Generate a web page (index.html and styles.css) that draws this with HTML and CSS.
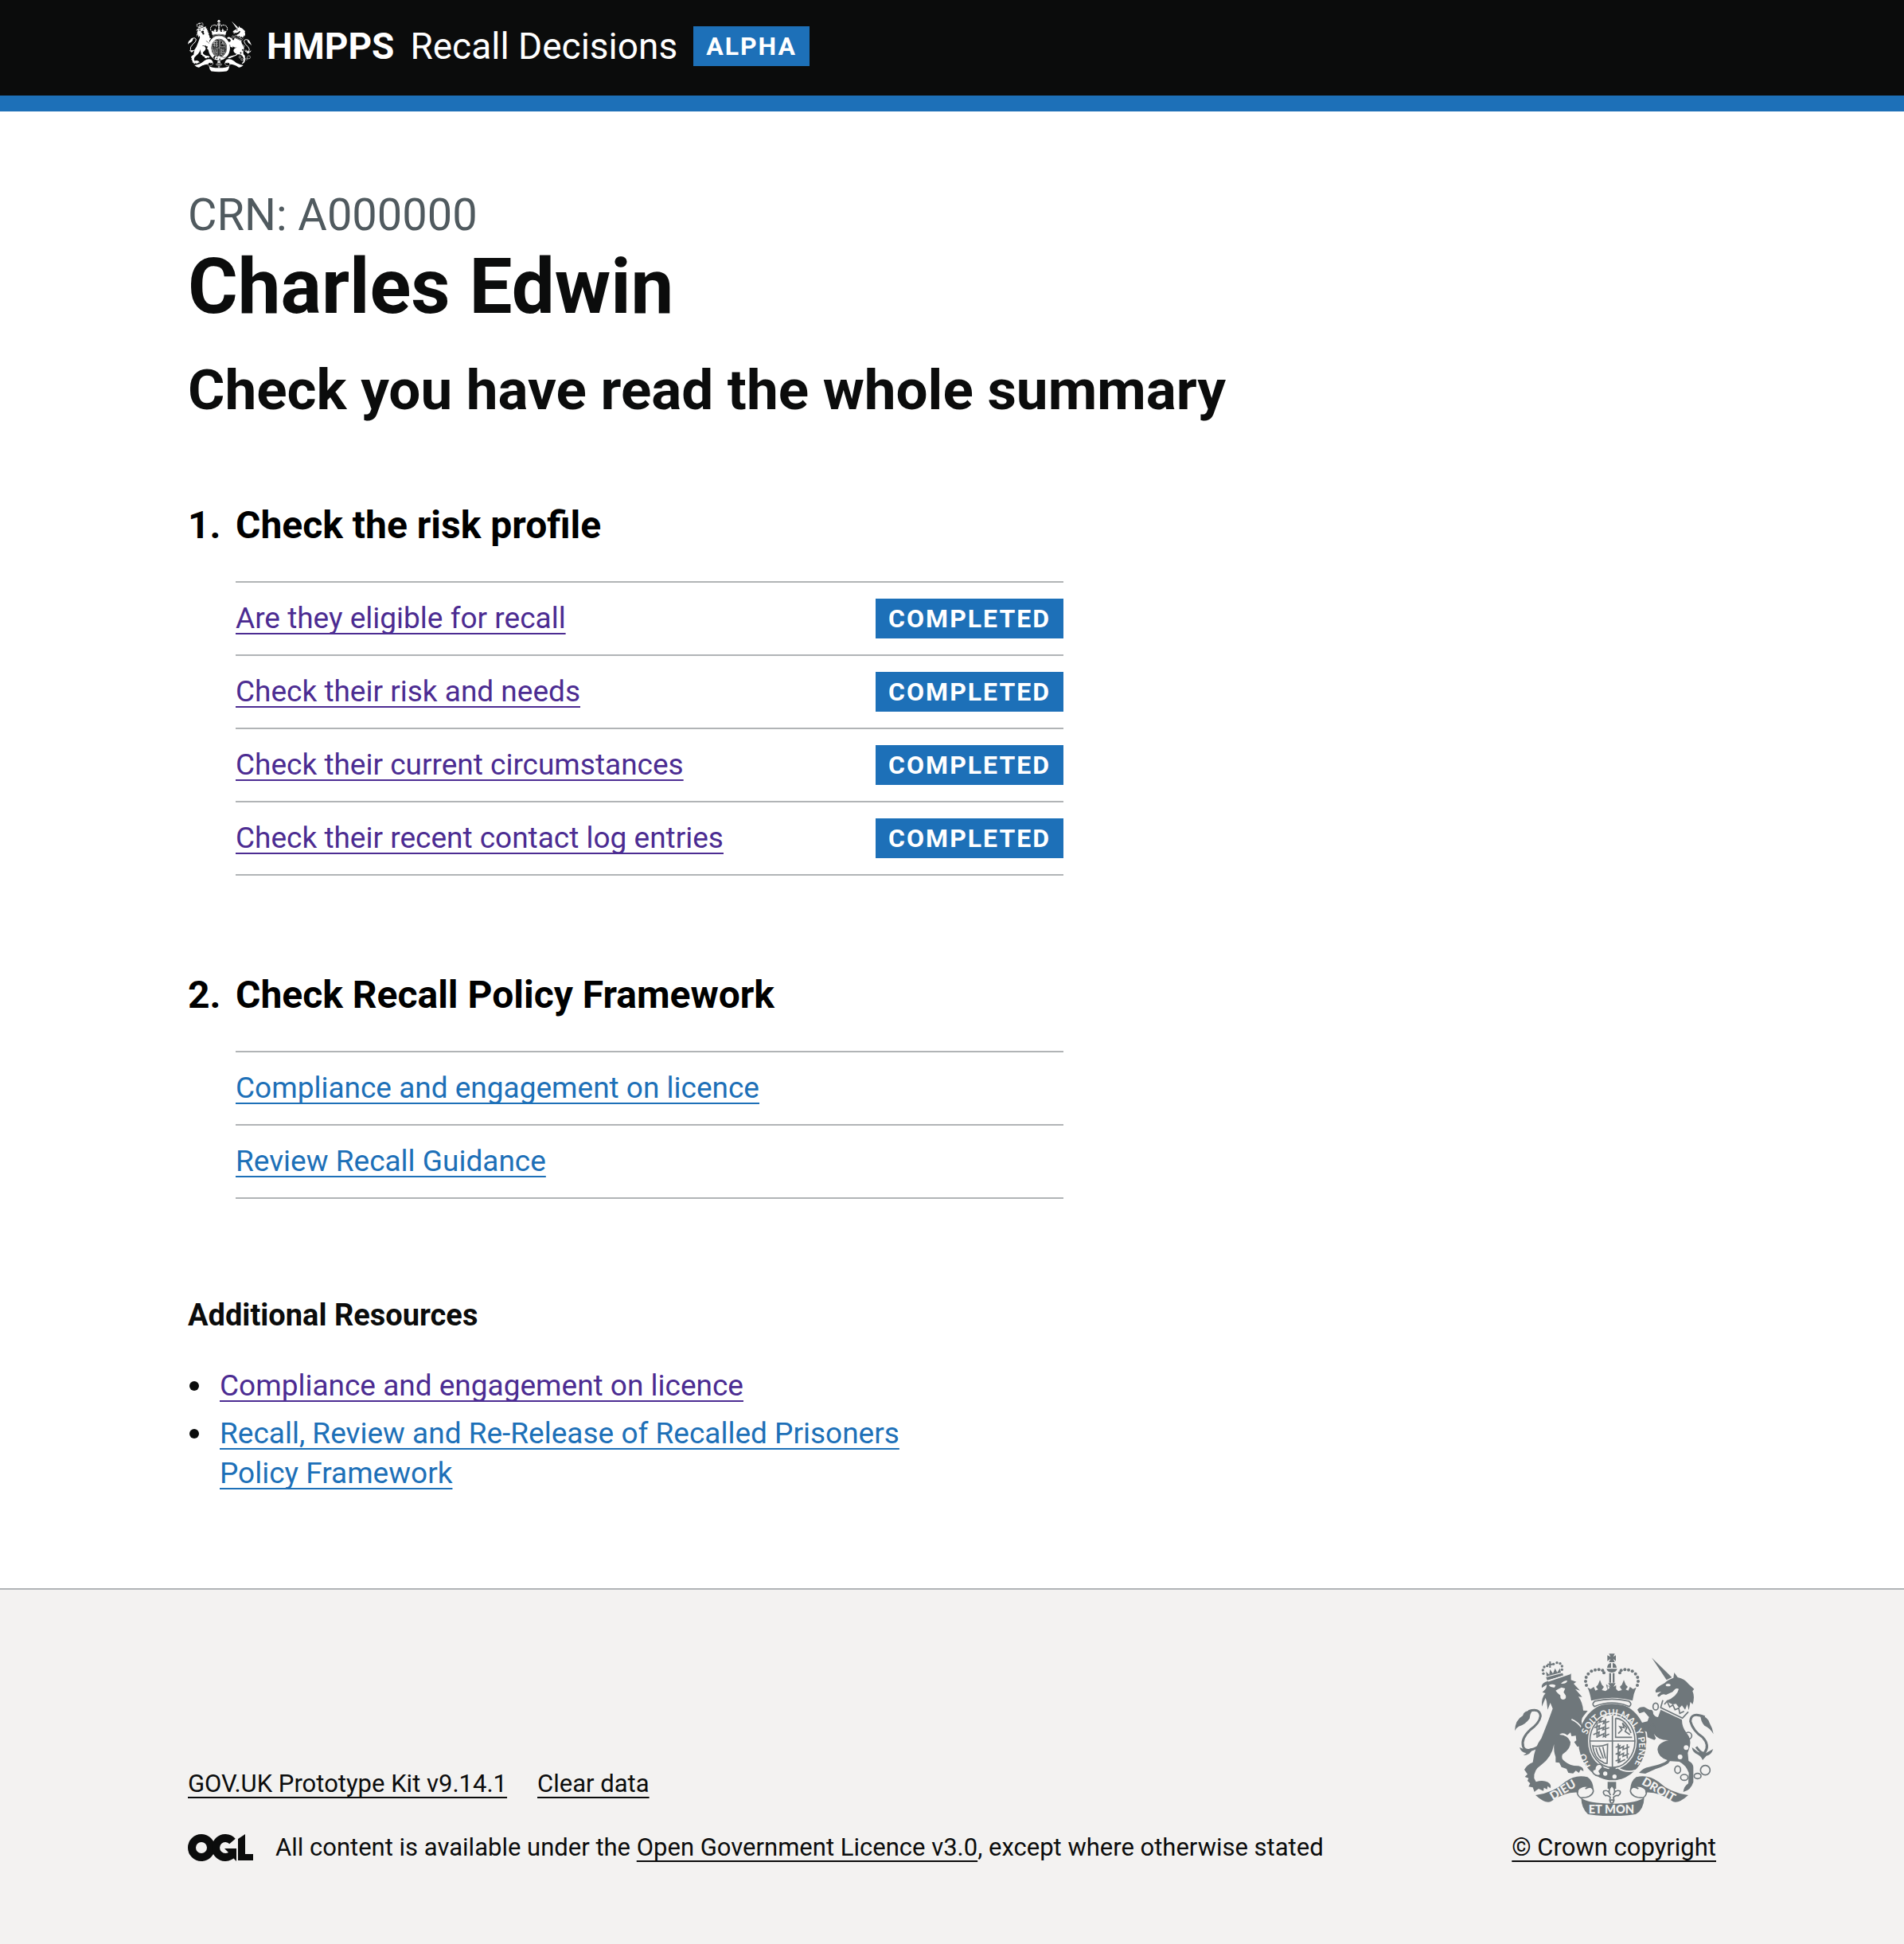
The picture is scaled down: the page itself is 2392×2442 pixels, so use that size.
FILE: index.html
```html
<!DOCTYPE html>
<html lang="en">
<head>
<meta charset="utf-8">
<meta name="viewport" content="width=device-width, initial-scale=1">
<title>Charles Edwin - Recall Decisions</title>
<link rel="stylesheet" href="styles.css">
</head>
<body>

<svg class="sprite" aria-hidden="true">
  <defs>
    <g id="arms">
      <!-- lion -->
      <path d="M176 157L272 126V150L292 157L282 164L306 190L288 184L314 214L300 213Q316 235 318 265L335 266L320 285Q305 300 318 330L325 345Q330 370 338 408L324 398L318 408L308 398L296 402L284 384L292 378L290 360L274 362L270 348L258 358Q240 345 228 356Q262 358 270 384Q272 410 240 430Q232 445 250 458Q270 475 300 474Q320 478 319 494L308 488L302 500L290 492L280 502L262 500L255 485L236 478L228 462L214 460V440Q206 420 208 392Q200 440 160 470Q130 490 133 520L140 534Q165 525 185 535Q200 545 194 558L184 550L182 562L170 556L168 568L150 560Q140 566 134 572L128 555L112 552L118 540L108 530L112 520L98 515L108 505L96 488Q105 470 128 460Q135 400 160 370Q185 310 203 258L194 236L184 262L180 230L176 218L162 250Q160 215 176 200L164 196Q184 180 180 168L162 180Q158 165 176 157Z"/>
      <path d="M178 140L240 124L244 134L182 151Z"/>
      <path d="M180 136L178 118L190 130L193 110L204 126L212 106L220 122L230 106L234 122Z"/>
      <path d="M190 80H196V88H203V94H196V104H190V94H183V88H190Z"/>
      <g>
        <circle cx="168" cy="126" r="5"/><circle cx="166" cy="113" r="5"/><circle cx="171" cy="101" r="5"/><circle cx="182" cy="97" r="5"/>
        <circle cx="206" cy="90" r="5"/><circle cx="219" cy="85" r="5"/><circle cx="231" cy="88" r="5"/><circle cx="238" cy="98" r="5"/><circle cx="238" cy="111" r="5"/>
      </g>
      <g class="cut">
        <path d="M188 170Q200 162 214 170L210 178Q196 180 188 170Z"/>
        <path d="M234 164Q244 152 258 152Q256 166 234 164Z"/>
        <path d="M214 190L224 184L236 178L250 182L244 196L252 208Q256 222 242 224Q230 222 232 208L222 200Z"/>
      </g>
      <path class="cutline" d="M274 298Q322 318 340 398M186 154L270 126"/>
      <path d="M60 342Q62 300 90 285Q92 265 128 264Q118 275 116 295Q100 318 75 325Q65 330 60 342Z"/>
      <path class="tail" d="M112 268Q154 254 157 286Q154 312 118 338Q82 372 92 402Q102 428 152 400"/>
      <path d="M78 404L102 414L128 406Q120 434 92 434L104 426Q84 424 78 404Z"/>

      <!-- unicorn -->
      <path d="M576 66L652 140L632 150Z"/>
      <path d="M590 190Q592 178 625 162Q634 150 658 142L661 122L674 140Q700 145 716 166L736 184L730 192Q740 215 730 242L722 232L716 264L710 242L702 262L690 246L680 256L668 240L655 242Q640 238 632 228Q672 212 678 184Q668 176 655 195L630 206Q615 200 606 212Q598 216 598 206L612 194L592 198Z"/>
      <path d="M610 262L690 300Q690 330 708 350Q726 372 720 400L712 425L715 455Q732 462 733 480V535Q724 565 695 572Q698 550 714 540L716 500Q705 470 680 458L645 456Q640 470 590 486L552 503L528 500Q545 480 565 478Q625 465 635 452Q600 440 598 412Q600 385 640 377Q600 378 584 352L592 370L586 376L560 366L558 346L538 336L536 312L560 306L566 290L548 270L530 276L522 262Q530 250 548 252L578 268Q584 288 600 290Z"/>
      <path class="line" d="M618 226L610 254L692 294L714 270M624 242L634 230L644 252L656 244L664 262L678 256L682 276L698 268"/>
      <path d="M760 283Q790 290 794 312Q805 330 809 354Q795 330 775 322Q760 305 760 283Z"/>
      <path class="tail" d="M776 290Q724 268 722 306Q732 342 768 366Q796 396 776 424Q764 430 744 402"/>
      <path d="M728 404L752 422L780 426L808 410Q800 434 782 436L768 452Q764 438 748 430Q730 424 728 404Z"/>
      <g class="cut">
        <circle cx="706" cy="405" r="9"/><circle cx="683" cy="440" r="9"/><ellipse cx="638" cy="169" rx="9" ry="5"/>
      </g>
      <g class="ring">
        <ellipse cx="591" cy="250" rx="10" ry="13"/><ellipse cx="580" cy="334" rx="11" ry="15"/><circle cx="714" cy="360" r="13"/>
        <ellipse cx="674" cy="488" rx="11" ry="14"/><ellipse cx="699" cy="517" rx="14" ry="11"/><ellipse cx="749" cy="512" rx="13" ry="10"/><circle cx="778" cy="490" r="18"/><ellipse cx="571" cy="275" rx="8" ry="10"/>
      </g>

      <!-- crown -->
      <path d="M415 51H437L431 63L441 57V79L431 70L437 83H415L421 70L409 79V57L421 63Z"/>
      <path d="M408 104Q410 88 423 86V104ZM429 104V86Q442 88 444 104ZM406 108H446Q444 120 426 122Q408 120 406 108ZM416 124H423V160H416ZM429 124H436V160H429Z"/>
      <g>
        <circle cx="396" cy="123" r="6"/><circle cx="391" cy="114" r="6"/><circle cx="377" cy="111" r="6"/><circle cx="363" cy="112" r="6"/><circle cx="349" cy="117" r="6"/><circle cx="337" cy="127" r="6"/><circle cx="329" cy="140" r="6"/><circle cx="327" cy="155" r="6"/><circle cx="330" cy="170" r="6"/>
        <circle cx="456" cy="123" r="6"/><circle cx="461" cy="114" r="6"/><circle cx="475" cy="111" r="6"/><circle cx="489" cy="112" r="6"/><circle cx="503" cy="117" r="6"/><circle cx="515" cy="127" r="6"/><circle cx="523" cy="140" r="6"/><circle cx="525" cy="155" r="6"/><circle cx="522" cy="170" r="6"/>
      </g>
      <path d="M334 178L346 184L358 176L364 190L374 186L366 176L374 168L381 150L388 168L396 176L388 188L402 192L418 180L410 170V192L404 166L420 176L412 162H440L432 176L448 166L442 170V184L450 192L464 188L456 176L464 168L471 150L478 168L486 176L478 186L488 190L494 176L506 184L518 178Q508 200 504 228Q426 206 348 228Q344 198 334 178Z"/>

      <!-- garter and shield -->
      <ellipse cx="428" cy="382" rx="128" ry="146"/>
      <path class="cut" d="M360 254Q426 226 494 254L498 232H354Z"/>
      <path class="roll" d="M362 230Q426 214 490 230Q504 240 492 250Q426 222 360 250Q348 240 362 230Z"/>
      <ellipse class="cut" cx="428" cy="380" rx="92" ry="107"/>
      <ellipse class="line" cx="428" cy="380" rx="85" ry="100"/>
      <path class="line" d="M428 280V480M343 380H513"/>
      <path class="charge" d="M364 306L384 300L378 310L398 304L394 314L416 306M360 330L380 322L376 336L396 328L392 338L416 330M356 356L378 346L376 362L396 352L394 364L416 354M370 300V368M402 296V368"/>
      <path class="charge" d="M440 404L456 398L452 410L470 400L468 412L492 402M440 430L456 422L452 436L470 426L468 438L490 428M440 456L456 448L454 460L476 450M450 390V464M484 392V446"/>
      <path class="charge" d="M440 294V366H502M440 294Q478 298 498 350M450 352L464 338L456 326L472 330L466 312L482 330L476 344L494 356"/>
      <path class="charge" d="M354 398Q380 404 410 392L408 464Q396 466 390 458Q360 446 354 398ZM366 406Q372 436 386 446M378 404L394 446M392 402L402 446"/>
      <path d="M416 478H440V490H416Z"/>
      <!-- buckle -->
      <path class="roll" d="M384 468Q362 466 362 486Q348 488 356 502Q372 518 384 506L378 494L392 478Z"/>
      <g class="cut"><circle cx="401" cy="503" r="8"/><circle cx="436" cy="514" r="8"/></g>
      <path class="cutline" d="M450 482Q490 508 540 480"/>

      <!-- ribbon -->
      <path class="roll" d="M326 560Q356 544 356 570Q350 594 308 594Q288 580 300 560Q312 546 340 552Z"/>
      <path class="roll" d="M526 560Q496 544 496 570Q502 594 544 594Q564 580 552 560Q540 546 512 552Z"/>
      <path d="M138 584Q206 576 250 534Q290 504 334 516Q356 530 357 566Q338 544 312 556Q296 562 300 574Q250 570 196 608Q176 618 138 584Z"/>
      <path d="M714 584Q646 576 602 534Q562 504 518 516Q496 530 495 566Q514 544 540 556Q556 562 552 574Q602 570 656 608Q676 618 714 584Z"/>
      <path d="M310 594Q336 616 426 616Q516 616 548 594Q546 640 516 656Q426 670 336 656Q312 636 310 594Z"/>
      <path d="M410 534H442V560H410Z"/>
      <path class="fleur" d="M426 548Q408 566 421 584Q412 562 396 568Q390 578 402 586Q410 582 420 592L418 604H434L432 592Q442 582 450 586Q462 578 456 568Q440 562 431 584Q444 566 426 548Z"/>
      <circle class="fleur" cx="426" cy="608" r="6"/>
    </g>
    <path id="garter-line" d="M350 480A102 118 0 1 1 500 484"/>
  </defs>
</svg>

<header class="header">
  <div class="container header-row">
    <a class="brand" href="#">
      <svg class="header-crest" viewBox="60 50 750 620" aria-hidden="true"><use href="#arms"/></svg>
      <strong>HMPPS</strong>
    </a>
    <a class="service" href="#">Recall Decisions</a>
    <strong class="tag">ALPHA</strong>
  </div>
</header>

<main class="container main">
  <h1 class="title"><span class="caption">CRN: A000000</span>Charles Edwin</h1>
  <h2 class="subtitle">Check you have read the whole summary</h2>

  <ol class="tasks">
    <li class="section">
      <h2 class="section-title"><span class="number">1.</span>Check the risk profile</h2>
      <ul class="items">
        <li class="item"><a class="visited" href="#">Are they eligible for recall</a><strong class="tag">COMPLETED</strong></li>
        <li class="item"><a class="visited" href="#">Check their risk and needs</a><strong class="tag">COMPLETED</strong></li>
        <li class="item"><a class="visited" href="#">Check their current circumstances</a><strong class="tag">COMPLETED</strong></li>
        <li class="item"><a class="visited" href="#">Check their recent contact log entries</a><strong class="tag">COMPLETED</strong></li>
      </ul>
    </li>
    <li class="section">
      <h2 class="section-title"><span class="number">2.</span>Check Recall Policy Framework</h2>
      <ul class="items">
        <li class="item"><a href="#">Compliance and engagement on licence</a></li>
        <li class="item"><a href="#">Review Recall Guidance</a></li>
      </ul>
    </li>
  </ol>

  <h3 class="resources-title">Additional Resources</h3>
  <ul class="resources">
    <li><a class="visited" href="#">Compliance and engagement on licence</a></li>
    <li><a href="#">Recall, Review and Re-Release of Recalled Prisoners Policy Framework</a></li>
  </ul>
</main>

<footer class="footer">
  <div class="container footer-row">
    <div class="meta">
      <div class="footer-links"><a href="#">GOV.UK Prototype Kit v9.14.1</a><a href="#">Clear data</a></div>
      <div class="licence">
        <svg class="ogl" viewBox="0 0 82 34" role="img" aria-label="Open Government Licence">
          <circle cx="17" cy="17" r="12"/>
          <path d="M56 9A12 12 0 1 0 56 25"/>
          <path class="solid" d="M46 18H61V34L56 29L50 27L52 24Z"/>
          <path class="solid" d="M63 6L72 0V25H82V33H63Z"/>
        </svg>
        <span>All content is available under the <a href="#">Open Government Licence v3.0</a>, except where otherwise stated</span>
      </div>
    </div>
    <a class="copyright" href="#">
      <svg class="footer-crest" viewBox="60 50 750 612" aria-hidden="true">
        <use href="#arms"/>
        <g class="motto">
          <text><textPath href="#garter-line" startOffset="6">HO<tspan dx="70">SOIT QUI MAL Y PENSE</tspan></textPath></text>
          <text class="ribbon" transform="translate(204 604) rotate(-31)">DIEU</text>
          <text class="ribbon" transform="translate(536 542) rotate(30)">DROIT</text>
          <text class="ribbon" x="338" y="654">ET MON</text>
        </g>
      </svg>
      <span>© Crown copyright</span>
    </a>
  </div>
</footer>

</body>
</html>
```
FILE: styles.css
```css
* {
  box-sizing: border-box;
}

body {
  margin: 0;
  background: #f3f2f1;
  color: #0b0c0c;
  font-family: Roboto, "Liberation Sans", sans-serif;
  font-size: 37px;
  line-height: 50px;
}

h1, h2, h3, ol, ul {
  margin: 0;
  padding: 0;
}

a {
  color: #1d70b8;
  text-decoration-line: underline;
  text-decoration-thickness: 2px;
  text-underline-offset: 6px;
  text-decoration-skip-ink: none;
}

.visited {
  color: #4c2c92;
}

.sprite {
  position: absolute;
  width: 0;
  height: 0;
}

.container {
  max-width: 1920px;
  margin: 0 auto;
}

/* Header */

.header {
  background: #0b0c0c;
  border-bottom: 20px solid #1d70b8;
  color: #ffffff;
}

.header-row {
  display: flex;
  align-items: center;
  gap: 20px;
  padding-top: 24px;
  padding-bottom: 28px;
  font-size: 46px;
}

.header-row a {
  color: #ffffff;
  text-decoration: none;
}

.brand {
  display: flex;
  align-items: center;
  gap: 19px;
}

.header-crest {
  --cut: #0b0c0c;
  display: block;
  width: 80px;
  height: 68px;
  fill: currentColor;
}

.tag {
  flex: none;
  padding: 0 16px;
  background: #1d70b8;
  color: #ffffff;
  font-size: 32px;
  line-height: 50px;
  letter-spacing: 2px;
}

/* Main content */

.main {
  max-width: none;
  padding: 100px max(30px, calc(50% - 960px)) 109px;
  background: #ffffff;
}

.title {
  font-size: 96px;
  line-height: 100px;
}

.caption {
  display: block;
  margin-bottom: 10px;
  color: #505a5f;
  font-size: 56px;
  font-weight: 400;
  line-height: 60px;
}

.subtitle {
  margin: 40px 0 104px;
  font-size: 71px;
  line-height: 80px;
}

.tasks,
.items {
  list-style: none;
}

.section {
  max-width: 1100px;
  margin-bottom: 124px;
}

.section-title {
  display: flex;
  margin-bottom: 44px;
  color: #000000;
  font-size: 48px;
  line-height: 52px;
}

.number {
  width: 60px;
}

.items {
  margin-left: 60px;
  border-top: 2px solid #b1b4b6;
}

.item {
  display: flex;
  align-items: center;
  justify-content: space-between;
  padding: 20px 0;
  border-bottom: 2px solid #b1b4b6;
}

.resources-title {
  margin-bottom: 42px;
  font-size: 38px;
  line-height: 44px;
}

.resources {
  max-width: 940px;
  list-style: none;
}

.resources li {
  display: grid;
  grid-template-columns: 12px 1fr;
  gap: 26px;
  margin-bottom: 10px;
  padding-left: 2px;
}

.resources li::before {
  content: "";
  height: 12px;
  margin-top: 19px;
  border-radius: 50%;
  background: #0b0c0c;
}

/* Footer */

.footer {
  padding: 80px 0 100px;
  border-top: 2px solid #b1b4b6;
  font-size: 31px;
  line-height: 40px;
}

.footer a {
  color: #0b0c0c;
}

.footer-row {
  display: flex;
  align-items: flex-end;
  justify-content: space-between;
}

.meta {
  display: grid;
  gap: 40px;
}

.footer-links {
  display: flex;
  gap: 38px;
}

.licence {
  display: flex;
  align-items: center;
  gap: 28px;
}

.ogl {
  flex: none;
  width: 82px;
  height: 34px;
  fill: none;
  stroke: #0b0c0c;
  stroke-width: 10px;
}

.ogl .solid {
  fill: #0b0c0c;
  stroke: none;
}

.copyright {
  display: flex;
  flex-direction: column;
  align-items: center;
  gap: 20px;
}

.footer-crest {
  --cut: #f3f2f1;
  display: block;
  width: 250px;
  height: 204px;
  color: #6f777b;
  fill: currentColor;
}

/* Coat of arms */

.cut {
  fill: var(--cut);
}

.cutline {
  fill: none;
  stroke: var(--cut);
  stroke-width: 5px;
}

.tail {
  fill: none;
  stroke: currentColor;
  stroke-width: 9px;
}

.line,
.charge,
.ring {
  fill: none;
  stroke: currentColor;
  stroke-width: 5px;
}

.roll,
.fleur {
  fill: var(--cut);
  stroke: currentColor;
  stroke-width: 5px;
}

.motto {
  fill: var(--cut);
  font-family: Lato, sans-serif;
  font-size: 34px;
  font-weight: 700;
}

.ribbon {
  font-size: 44px;
  font-weight: 900;
}
```
